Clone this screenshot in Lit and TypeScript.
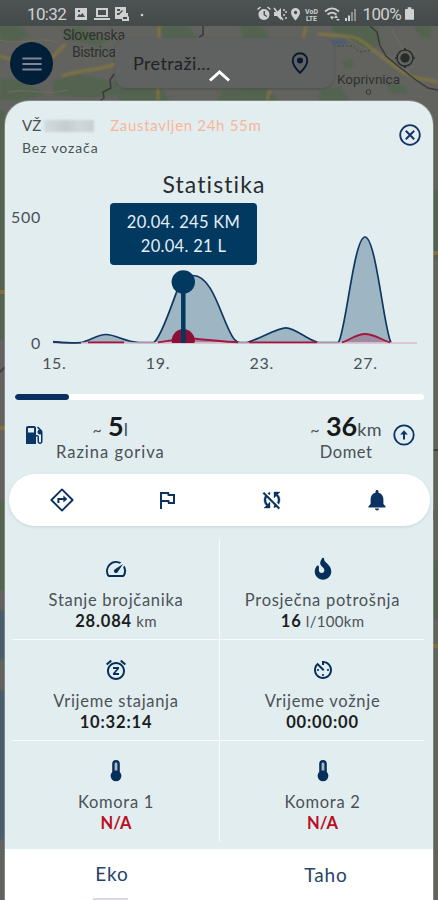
import { LitElement, html, css, svg, nothing } from "lit";
import { customElement, property } from "lit/decorators.js";

const icons: Record<string, unknown> = {
  fuel: svg`<path d="M19.77 7.23l.01-.01-3.72-3.72L15 4.56l2.11 2.11c-.94.36-1.61 1.26-1.61 2.33 0 1.38 1.12 2.5 2.5 2.5.36 0 .69-.08 1-.21v7.21c0 .55-.45 1-1 1s-1-.45-1-1V14c0-1.1-.9-2-2-2h-1V5c0-1.1-.9-2-2-2H6c-1.1 0-2 .9-2 2v16h10v-7.5h1.5v5c0 1.38 1.12 2.5 2.5 2.5s2.5-1.12 2.5-2.5V9c0-.69-.28-1.32-.73-1.77zM12 9.500H6V5h6v4.500z"/>`,
  range: svg`<circle cx="12" cy="12" r="9.7" fill="none" stroke="currentColor" stroke-width="1.8"/><path d="M12 16.500V9" fill="none" stroke="currentColor" stroke-width="2"/><path d="M8.200 11.500L12 7.200l3.800 4.300z"/>`,
  close: svg`<circle cx="12" cy="12" r="9.8" fill="none" stroke="currentColor" stroke-width="1.8"/><path d="M7.800 7.800l8.400 8.400M16.200 7.800l-8.400 8.400" fill="none" stroke="currentColor" stroke-width="2"/>`,
  directions: svg`<path d="M12 1.4L22.6 12 12 22.600 1.4 12z" fill="none" stroke="currentColor" stroke-width="1.900" stroke-linejoin="round"/><path d="M8.400 15v-4h6" fill="none" stroke="currentColor" stroke-width="2"/><path d="M13.400 7.400L17.400 11l-4 3.600z"/>`,
  flag: svg`<path d="M12.36 6l.4 2H18v6h-3.36l-.4-2H7V6h5.36M14 4H5v17h2v-7h5.6l.4 2h7V6h-5.6L14 4z"/>`,
  syncOff: svg`<path d="M10 6.35V4.26c-.8.21-1.55.54-2.23.96l1.46 1.46c.25-.12.5-.24.77-.33zm-7.14-.94l2.36 2.36C4.45 8.99 4 10.44 4 12c0 2.21.91 4.2 2.36 5.64L4 20h6v-6l-2.24 2.24C6.68 15.15 6 13.66 6 12c0-1 .25-1.94.68-2.77l8.08 8.08c-.25.13-.5.25-.77.34v2.09c.8-.21 1.55-.54 2.23-.96l2.36 2.36 1.27-1.27L4.14 4.14 2.86 5.41zM20 4h-6v6l2.24-2.24C17.32 8.85 18 10.34 18 12c0 1-.25 1.94-.68 2.77l1.46 1.46C19.55 15.01 20 13.56 20 12c0-2.21-.91-4.2-2.36-5.64L20 4z" stroke="currentColor" stroke-width=".4"/>`,
  bell: svg`<path d="M12 22.500c1.100 0 2-.9 2-2h-4c0 1.100.89 2 2 2zm6.400-6.500v-5c0-3.070-1.900-5.640-4.900-6.320V3.500c0-.83-.67-1.500-1.500-1.500s-1.500.67-1.500 1.500v1.180C7.400 5.360 5.600 7.920 5.600 11v5l-2.100 2.300v1.200h17v-1.200z"/>`,
  speed: svg`<path d="M20.38 8.57l-1.23 1.85a8 8 0 0 1-.22 7.58H5.07A8 8 0 0 1 15.58 6.85l1.85-1.23A10 10 0 0 0 3.35 19a2 2 0 0 0 1.72 1h13.85a2 2 0 0 0 1.74-1 10 10 0 0 0-.27-10.44zm-9.79 6.84a2 2 0 0 0 2.83 0l5.66-8.49-8.49 5.66a2 2 0 0 0 0 2.83z"/>`,
  fire: svg`<path transform="translate(3.75 .8) scale(.043)" d="M216 23.86c0-23.8-30.65-32.77-44.15-13.04C48 191.85 224 200 224 288c0 35.63-29.11 64.46-64.85 63.99-35.17-.45-63.15-29.77-63.15-64.94v-85.51c0-21.7-26.47-32.23-41.43-16.5C27.8 213.16 0 261.33 0 320c0 105.87 86.13 192 192 192s192-86.13 192-192c0-170.29-168-193-168-296.14z"/>`,
  snooze: svg`<path d="M7.88 3.39L6.6 1.86 2 5.71l1.29 1.53 4.59-3.85zM22 5.72l-4.6-3.86-1.29 1.53 4.6 3.86L22 5.72zM12 4c-4.97 0-9 4.03-9 9s4.02 9 9 9c4.97 0 9-4.03 9-9s-4.03-9-9-9zm0 16c-3.87 0-7-3.13-7-7s3.13-7 7-7 7 3.13 7 7-3.13 7-7 7zm-3-9h3.63L9 15.2V17h6v-2h-3.63L15 10.8V9H9v2z"/>`,
  timer: svg`<path d="M11 17c0 .55.45 1 1 1s1-.45 1-1-.45-1-1-1-1 .45-1 1zm0-14v4h2V5.08c3.39.49 6 3.39 6 6.92 0 3.87-3.13 7-7 7s-7-3.13-7-7c0-1.68.59-3.22 1.58-4.42L12 13l1.41-1.41-6.8-6.8v.02C4.42 6.45 3 9.05 3 12c0 4.97 4.02 9 9 9 4.97 0 9-4.03 9-9s-4.03-9-9-9h-1zm7 9c0-.55-.45-1-1-1s-1 .45-1 1 .45 1 1 1 1-.45 1-1zM6 12c0 .55.45 1 1 1s1-.45 1-1-.45-1-1-1-1 .45-1 1z"/>`,
  thermometer: svg`<path d="M8.2 4.800a3.800 3.800 0 0 1 7.600 0v8.200a5.400 5.400 0 1 1-7.600 0z"/><path d="M10.600 4.900a1.400 1.400 0 0 1 2.800 0v6.600h-2.800z" fill="#a9bac7"/>`,
  menu: svg`<path d="M1.500 6h21M1.500 12h21M1.500 18h21" stroke="currentColor" stroke-width="2" fill="none"/>`,
  pin: svg`<path d="M12 2.200c-4.200 0-7.300 3.200-7.300 7.200 0 5.300 7.300 12.400 7.300 12.400s7.300-7.100 7.300-12.400c0-4-3.100-7.200-7.300-7.200z" fill="none" stroke="currentColor" stroke-width="1.900"/><circle cx="12" cy="9.500" r="3"/>`,
  locate: svg`<circle cx="12" cy="12" r="8" fill="none" stroke="currentColor" stroke-width="1.500"/><circle cx="12" cy="12" r="4.700"/><path d="M12 2V4M12 20v2M2 12H4M20 12h2" stroke="currentColor" stroke-width="1.700"/>`,
};

@customElement("app-icon")
class AppIcon extends LitElement {
  @property() name = "";
  static styles = css`
    :host { display: block; width: 24px; height: 24px; flex: none; }
    svg { display: block; width: 100%; height: 100%; fill: currentColor; }
  `;
  render() {
    return html`<svg viewBox="0 0 24 24">${icons[this.name]}</svg>`;
  }
}

@customElement("map-backdrop")
class MapBackdrop extends LitElement {
  static styles = css`
    :host { display: block; }
    svg { display: block; width: 100%; height: 100%; }
    text { font-family: Roboto, "Liberation Sans", sans-serif; fill: #2f302f; }
  `;
  render() {
    return html`<svg viewBox="0 0 438 900">
      <defs><filter id="soft"><feGaussianBlur stdDeviation="1.3" /></filter></defs>
      <rect width="438" height="900" fill="#62635f" />
      <g filter="url(#soft)" fill="#526350">
        <path d="M0 26h22l8 10-14 6-16-2zM52 82l26-8 38 8 6 12-30 4-38-3zM0 78l22 2 24 14-20 6H0z" />
        <path d="M60 30l20-2 30 12-12 6-30-6zM158 26h30l10 12h-34zM240 26h22l8 12h-28z" />
        <path d="M332 26h42l8 14-10 10-14-3-12-10-14-5zM414 26h18l-2 14-12-5zM342 62l10-3 2 7-8 3z" />
        <path d="M120 88h40l10 13h-52zM222 90l44-3 12 14h-60zM320 90l20-4 10 15h-32zM384 82l20 4 4 8-18-2z" />
        <path d="M-4 110h9v230h-9zM-4 500h9v90h-9zM433 190h9v70h-9zM433 560h9v60h-9z" />
      </g>
      <g filter="url(#soft)" fill="#4b5d6d">
        <path d="M330 40l14-1 4 5-14 2zM-4 610h9v50h-9zM-4 690h9v150h-9z" />
      </g>
      <path d="M0 56l20 6M48 60c10-6 14-14 18-16M62 76c24-8 32-4 54-12M159 26v14M158 88v12M306 26l-3 12M270 90l-3 10M318 34c22 2 36 0 48 10s20 16 34 26 22 8 38 12"
        fill="none" stroke="#85773c" stroke-width="3" opacity=".85" filter="url(#soft)" />
      <path d="M0 40c20 6 38-4 58 2M8 92c20-4 40 4 60-2M340 36c14 4 20 14 40 18s24 10 30 20M392 30c4 10 12 14 10 24"
        fill="none" stroke="#6f6e60" stroke-width="1" />
      <path d="M203 26v9l-4 2M114 74l-4 6 1 8-8 4 1 6-4 3M370 26l7 6 3 14 6 10 12 10 18 14 12 8 10 2"
        fill="none" stroke="#393b39" stroke-width="1.5" />
      <path d="M338 46h14l8 6 12-2" fill="none" stroke="#424441" stroke-width="1" stroke-dasharray="2 2" />
      <path d="M0 428h5M0 292h5M433 253h5M433 646h5" stroke="#806e3e" stroke-width="4" />
      <path d="M433 450h5M0 372l5-5M433 510v10" stroke="#40413f" stroke-width="2" />
      <text x="63" y="39.5" font-size="14" textLength="62">Slovenska</text>
      <text x="72" y="56.5" font-size="14" textLength="44">Bistrica</text>
      <text x="337" y="84" font-size="13.5" textLength="63">Koprivnica</text>
      <circle cx="368.5" cy="92" r="2.3" fill="none" stroke="#343534" />
    </svg>`;
  }
}

@customElement("status-bar")
class StatusBar extends LitElement {
  static styles = css`
    :host {
      display: flex; align-items: center; justify-content: space-between;
      height: 26px; box-sizing: border-box; padding: 2px 24px 0 27px;
      background: linear-gradient(#4d5353, #444a4a);
      color: #cfd1d1; font: 400 17px/24px Roboto, sans-serif;
    }
    .side { display: flex; align-items: center; }
    .time { letter-spacing: -0.65px; width: 47px; }
    .pct { letter-spacing: -0.65px; margin: 0 4px 0 6px; }
    svg { display: block; fill: currentColor; }
  `;
  render() {
    return html`
      <div class="side">
        <span class="time">10:32</span>
        <svg width="72" height="16" viewBox="74 5 72 16">
          <path fill-rule="evenodd" d="M75 7h12v12H75zM77 16h8l-2.500-4-2 2-1.500-1zM78 9h2v2h-2z" />
          <path fill-rule="evenodd" d="M96 7h12v9h-12zM98 9v5h8V9zM94 17h16v2H94z" />
          <path fill-rule="evenodd" d="M115 6h11v6h2v3l1 1v4h-7v-2h-7zM117 8v2h3V8zM117 12h2l3-3 1 1-4 4h-2zM123 16v2h4v-2z" />
          <circle cx="142" cy="14" r="1.3" />
        </svg>
      </div>
      <div class="side">
        <svg width="100" height="16" viewBox="256 5 100 16">
          <path fill-rule="evenodd" d="M264 8a5.500 5.500 0 1 1-.1 0zM263.500 10v4l3 2 .8-1-2.300-1.500V10zM257 8l3-2.500 1 1-3 2.500zM271 8l-3-2.500-1 1 3 2.500z" />
          <path d="M274 11h3l4-4v12l-4-4h-3z" /><path d="M274 7l9 12M284 8v2M286 10v2M284 13v2M286 16v2" stroke="currentColor" stroke-width="1.5" />
          <path fill-rule="evenodd" d="M295.500 7a4.500 4.500 0 0 1 4.500 4.500c0 3.500-4.500 8-4.500 8s-4.500-4.500-4.500-8A4.500 4.500 0 0 1 295.500 7zM295.500 9.800a1.700 1.700 0 1 0 .1 0z" />
          <text x="305" y="12.5" font-size="7" font-weight="700" textLength="13">VoD</text>
          <text x="306" y="19.5" font-size="7" font-weight="700" textLength="11">LTE</text>
          <path d="M325 10.500c4.500-4 9.500-4 14 0M327.500 13.500c3-2.600 6-2.600 9 0" fill="none" stroke="currentColor" stroke-width="1.7" />
          <path d="M330 16c1-1 3-1 4 0l-2 2.500zM336 14l2 3h-4zM338 20l-2-2h4z" />
          <path d="M345 20v-3h2v3zM348 20v-5.500h2V20z" /><path d="M351 20v-9h2v9zM354 20V8h2v12z" opacity=".5" />
        </svg>
        <span class="pct">100%</span>
        <svg width="9" height="14" viewBox="0 0 10 15"><path d="M3 0h4v2h2a1 1 0 0 1 1 1v11H0V3a1 1 0 0 1 1-1h2z" /></svg>
      </div>
    `;
  }
}

@customElement("usage-chart")
class UsageChart extends LitElement {
  static styles = css`
    :host { display: block; position: relative; height: 174px; color: #4a5155; font-size: 16px; line-height: 20px; }
    .body { display: flex; height: 154px; }
    .scale { width: 36px; box-sizing: border-box; padding-top: 8px; display: flex; flex-direction: column; justify-content: space-between; align-items: flex-end; letter-spacing: .7px; }
    .plot { display: block; width: 392px; height: 154px; }
    .days { display: grid; grid-template-columns: repeat(4, 103.7px); margin-left: -2.5px; text-align: center; letter-spacing: .7px; }
    .tip {
      position: absolute; left: 105px; top: 4px; width: 147px; height: 62px; box-sizing: border-box;
      padding-top: 7px; border-radius: 4px; background: #013961; color: #e6eef3;
      font-size: 16.5px; line-height: 24px; letter-spacing: .3px; text-align: center;
    }
  `;
  render() {
    const km = "M53 341.5C60 342.5 74 343 81 342.5C90 341 97 334.5 106 334.5C116 334.5 125 342 139 342.5H154C163 335 174 296 180 284C184 276 188 275.5 193 275.5C214 275.5 222 323 234 339Q237 342.5 240 342.5H247C262 338 277 327.8 286 327.8C295 327.8 306 339 318 342.5H338.5C346 330 354 237 365 237C376 237 384 330 391 342.5";
    const litres = "M85 342.3Q106 340.5 126 342.3H158C170 341 178 338.3 192 338.5C207 339.5 225 342 238 342.3H342C350 340 356 334 365 334C374 334 382 340 390 342.5";
    return html`
      <div class="body">
        <div class="scale"><span>500</span><span>0</span></div>
        <svg class="plot" viewBox="41 199 392 154">
          <path d="${km}H53z" fill="#013961" fill-opacity=".3" />
          <path d="${litres}H85z" fill="#9a1038" fill-opacity=".25" />
          <path d=${km} fill="none" stroke="#10375f" stroke-width="1.7" />
          <path d="M53 343H417" stroke="#dcb9c6" stroke-width="1.6" />
          <path d="M53 341.8Q66 343.2 81 342.6" fill="none" stroke="#10375f" stroke-width="1.7" />
          <path d="M88 342.300H124M249 342.400H317" stroke="#a3173f" stroke-width="1.7" />
          <path d="M158 342.300C170 341 178 338.300 192 338.500C207 339.500 225 342 238 342.300M342 342.500C350 340 356 334 365 334C374 334 382 340 390 342.500" fill="none" stroke="#a3173f" stroke-width="1.8" />
          <path d="M172 343a11.500 11.500 0 1 1 22.500 0z" fill="#8c0f38" />
          <path d="M183.300 282V343" stroke="#013961" stroke-width="4.5" />
          <circle cx="183.3" cy="282" r="11.7" fill="#013961" />
        </svg>
      </div>
      <div class="days">${["15.", "19.", "23.", "27."].map((d) => html`<span>${d}</span>`)}</div>
      <div class="tip">20.04. 245 KM<br />20.04. 21 L</div>
    `;
  }
}

@customElement("stat-cell")
class StatCell extends LitElement {
  @property() icon = "";
  @property() label = "";
  @property() value = "";
  @property() unit = "";
  @property({ type: Boolean }) missing = false;
  static styles = css`
    :host { display: flex; flex-direction: column; align-items: center; padding: 18px 0 0 1px; box-sizing: border-box; }
    app-icon { color: #062f5b; margin-bottom: 9px; }
    .label { font-size: 16.5px; line-height: 21px; letter-spacing: .7px; color: #4b5256; white-space: nowrap; }
    .value { font-size: 16.5px; line-height: 21px; color: #4b5256; white-space: nowrap; }
    b { font-weight: 700; color: #1b1e20; letter-spacing: .85px; }
    .unit { font-size: 15px; letter-spacing: .3px; }
    .missing b { color: #b80f25; letter-spacing: 0; }
  `;
  render() {
    return html`
      <app-icon name=${this.icon}></app-icon>
      <div class="label">${this.label}</div>
      <div class="value ${this.missing ? "missing" : ""}"><b>${this.value}</b>${this.unit ? html` <span class="unit">${this.unit}</span>` : nothing}</div>
    `;
  }
}

@customElement("app-root")
class AppRoot extends LitElement {
  static styles = css`
    :host { display: block; position: relative; width: 438px; height: 900px; overflow: hidden; font-family: Lato, "Liberation Sans", sans-serif; }
    map-backdrop { position: absolute; inset: 0; }
    .screen { position: relative; display: flex; flex-direction: column; height: 100%; }
    .top { height: 75px; box-sizing: border-box; padding: 12px 20px 0 10px; display: flex; align-items: flex-start; }
    .menu { margin-top: 4px; width: 43px; height: 43px; border-radius: 50%; background: #021f39; color: #7e8794; display: grid; place-items: center; }
    .menu app-icon { width: 22px; height: 22px; }
    .search {
      margin-left: 62px; width: 219px; height: 50px; box-sizing: border-box; padding: 0 22px 0 18px;
      display: flex; align-items: center; justify-content: space-between; border-radius: 12px;
      background: #606161; color: #202223; font-size: 18px; letter-spacing: .4px;
      box-shadow: 0 1px 3px rgba(0, 0, 0, .2);
    }
    .search app-icon { color: #061a2f; }
    .locate { color: #292b2b; margin: 8px 0 0 59px; }
    .chevron { position: absolute; left: 207px; top: 68px; width: 25px; height: 15px; }
    .sheet {
      margin: 0 5px; flex: 1; border-radius: 24px 24px 0 0; background: #e2edf0;
      box-shadow: 0 0 0 1px rgba(190, 198, 198, .35); display: flex; flex-direction: column;
    }
    .head { display: flex; justify-content: space-between; height: 68px; box-sizing: border-box; padding: 14px 11px 0 17px; color: #4a5155; }
    .head app-icon { margin-top: 8px; color: #153463; }
    .line { display: flex; align-items: center; font-size: 15px; line-height: 21.5px; }
    .plate { width: 50px; height: 12px; margin-left: 3px; background: linear-gradient(90deg, #d3dbdd, #c5cdd0 45%, #d0d8da 70%, #c9d0d3); filter: blur(.8px); }
    .state { margin-left: 16px; color: #f8b698; letter-spacing: .68px; }
    .driver { font-size: 14px; line-height: 21.5px; letter-spacing: .88px; }
    .title { font-size: 23px; line-height: 30px; letter-spacing: 1.1px; text-align: center; padding-right: 10px; color: #272c2f; }
    .track { margin: 21px 9px 0 10px; height: 6px; border-radius: 3px; background: #fff; overflow: hidden; flex: none; }
    .fill { height: 100%; border-radius: 3px; background: #09305e; }
    .levels { height: 74px; box-sizing: border-box; padding: 11px 17px 0 17px; display: flex; justify-content: space-between; color: #4a5155; }
    .level { display: flex; gap: 10px; }
    .level app-icon { margin-top: 12px; color: #0b3566; }
    .amount { text-align: center; font-size: 18px; line-height: 30px; height: 30px; letter-spacing: .4px; white-space: nowrap; }
    .amount b { font-size: 27px; color: #17191b; letter-spacing: 0; }
    .tilde { font-size: 16px; margin-right: 1px; }
    .caption { text-align: center; font-size: 16.5px; line-height: 22px; letter-spacing: 1px; }
    .km .caption { letter-spacing: .6px; }
    .actions { margin: 0 3.5px 0 4px; height: 52px; border-radius: 26px; background: #fff; display: grid; grid-template-columns: repeat(4, 1fr); place-items: center; color: #0b3262; box-shadow: 0 1px 3px rgba(90, 120, 140, .2); }
    .stats { margin: 13px 9px 0 7px; height: 310px; display: grid; grid-template-columns: 208px 204px; grid-auto-rows: 101px; }
    .left { border-right: 1px solid #f7fbfc; }
    .ruled { border-bottom: 1px solid #f7fbfc; }
    .tabs { flex: 1; background: #fff; display: grid; grid-template-columns: 1fr 1fr; font-size: 19px; line-height: 24px; text-align: center; color: #254468; letter-spacing: .9px; }
    .tab { display: flex; flex-direction: column; align-items: center; justify-content: space-between; padding-top: 13px; }
    .tab:last-child { padding-top: 14px; }
    .mark { width: 35px; height: 2px; margin-right: 4px; background: #d5dbe0; }
  `;
  render() {
    const used = 13.1;
    return html`
      <map-backdrop></map-backdrop>
      <div class="screen">
        <status-bar></status-bar>
        <div class="top">
          <div class="menu"><app-icon name="menu"></app-icon></div>
          <div class="search"><span>Pretraži...</span><app-icon name="pin"></app-icon></div>
          <app-icon class="locate" name="locate"></app-icon>
        </div>
        <div class="sheet">
          <div class="head">
            <div>
              <div class="line"><span>VŽ</span><span class="plate"></span><span class="state">Zaustavljen 24h 55m</span></div>
              <div class="driver">Bez vozača</div>
            </div>
            <app-icon name="close"></app-icon>
          </div>
          <div class="title">Statistika</div>
          <usage-chart></usage-chart>
          <div class="track"><div class="fill" style="width:${used}%"></div></div>
          <div class="levels">
            <div class="level">
              <app-icon name="fuel"></app-icon>
              <div><div class="amount"><span class="tilde">~</span> <b>5</b>l</div><div class="caption">Razina goriva</div></div>
            </div>
            <div class="level km">
              <div><div class="amount"><span class="tilde">~</span> <b>36</b>km</div><div class="caption">Domet</div></div>
              <app-icon name="range"></app-icon>
            </div>
          </div>
          <div class="actions">
            ${["directions", "flag", "syncOff", "bell"].map((n) => html`<app-icon name=${n}></app-icon>`)}
          </div>
          <div class="stats">
            <stat-cell class="left ruled" icon="speed" label="Stanje brojčanika" value="28.084" unit="km"></stat-cell>
            <stat-cell class="ruled" icon="fire" label="Prosječna potrošnja" value="16" unit="l/100km"></stat-cell>
            <stat-cell class="left ruled" icon="snooze" label="Vrijeme stajanja" value="10:32:14"></stat-cell>
            <stat-cell class="ruled" icon="timer" label="Vrijeme vožnje" value="00:00:00"></stat-cell>
            <stat-cell class="left" icon="thermometer" label="Komora 1" value="N/A" missing></stat-cell>
            <stat-cell icon="thermometer" label="Komora 2" value="N/A" missing></stat-cell>
          </div>
          <div class="tabs">
            <div class="tab"><span>Eko</span><span class="mark"></span></div>
            <div class="tab"><span>Taho</span></div>
          </div>
        </div>
      </div>
      <svg class="chevron" viewBox="0 0 25 15"><path d="M3 12.500L12.500 4 22 12.500" fill="none" stroke="#fff" stroke-width="3" /></svg>
    `;
  }
}
